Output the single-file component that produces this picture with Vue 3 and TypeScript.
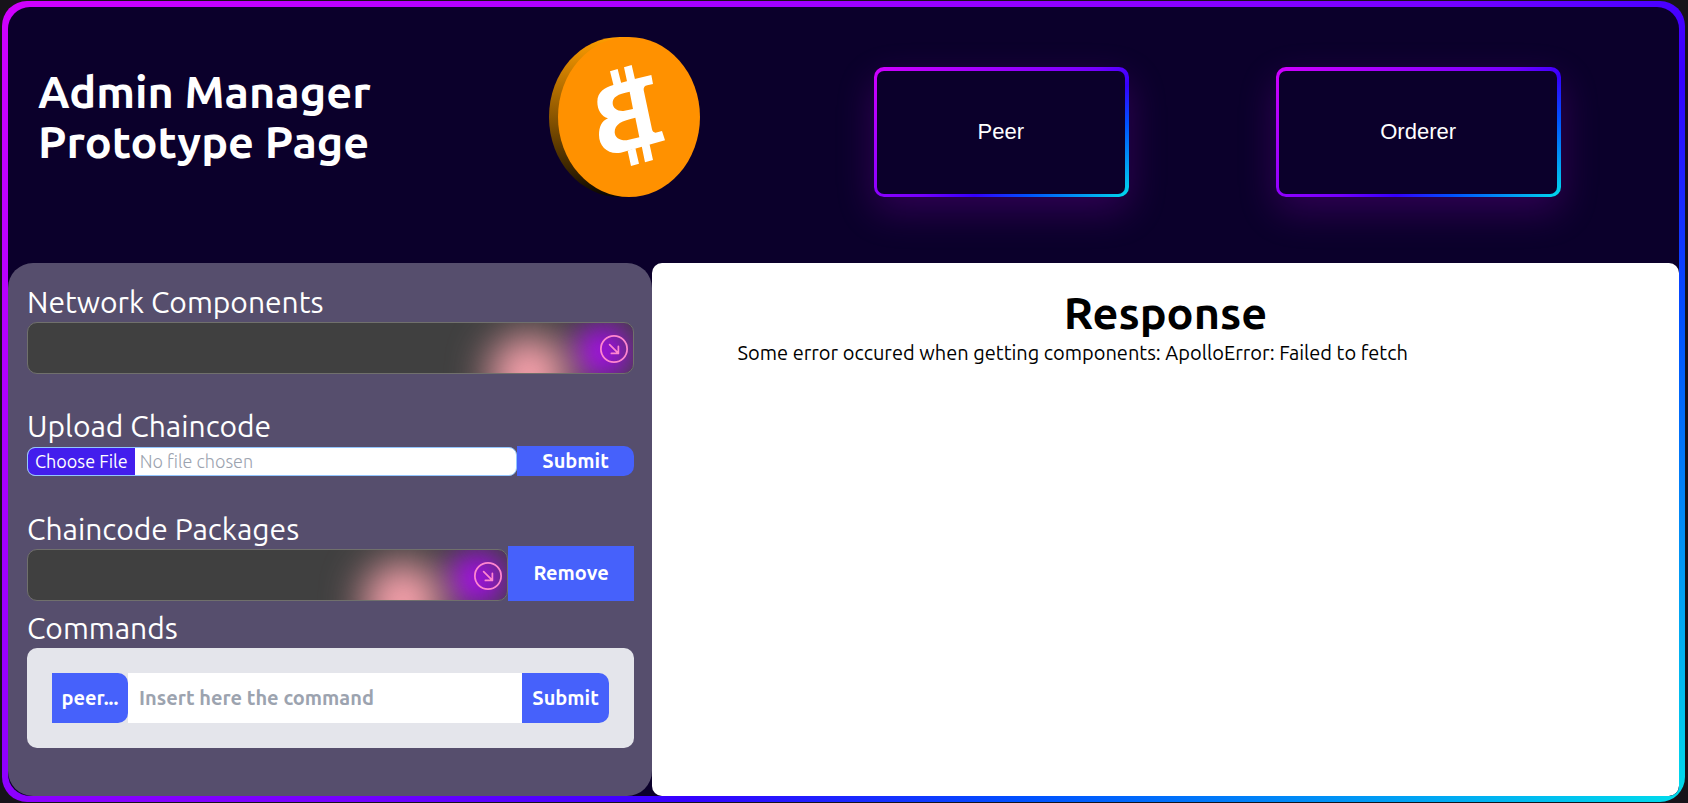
<script setup lang="ts">
import { ref } from 'vue'

const component = ref<string>('')
const chaincodePackage = ref<string>('')
const command = ref<string>('')
const response = ref<string>(
  'Some error occured when getting components: ApolloError: Failed to fetch',
)
const nodeTypes: string[] = ['Peer', 'Orderer']
</script>

<template>
  <div class="frame">
    <main class="page">
      <header class="top">
        <h1 class="title">Admin Manager Prototype Page</h1>
        <svg class="coin" viewBox="57 51 453 480" aria-hidden="true">
          <defs>
            <linearGradient id="rim" x1="0" y1="0" x2="0" y2="1">
              <stop offset="0" stop-color="#ff9d00" />
              <stop offset="0.5" stop-color="#8a5500" />
              <stop offset="0.85" stop-color="#352100" />
              <stop offset="1" stop-color="#0a0600" />
            </linearGradient>
          </defs>
          <path
            fill="url(#rim)"
            d="M297 51H270C152 51 57 158 57 291S152 531 270 531H297Z"
          />
          <ellipse cx="297" cy="291" rx="213" ry="240" fill="#ff9100" />
          <path
            fill="#fff"
            fill-rule="evenodd"
            d="M364 165L369 192L352 196Q340 198 341 210L366 328Q369 341 382 337L396 333L405 361L272 398C235 405 207 380 207 345C207 320 215 303 234 295C215 290 202 270 202 245C202 215 225 203 250 195L314 177ZM299 215C262 222 248 232 248 249C248 264 262 274 280 273L309 267ZM316 293C275 302 254 312 254 337C255 353 268 362 290 361L328 352Z"
          />
          <path
            fill="#fff"
            d="M240 154L263 147L275 195L252 202ZM282 142L305 135L316 182L292 188ZM293 392L316 384L327 431L303 438ZM335 378L358 370L369 420L345 427Z"
          />
        </svg>
        <button
          v-for="type in nodeTypes"
          :key="type"
          type="button"
          class="node-button"
          :class="type.toLowerCase()"
        >
          <span class="node-label">{{ type }}</span>
        </button>
      </header>

      <div class="workspace">
        <section class="controls">
          <div class="group">
            <label class="label" for="components">Network Components</label>
            <div class="picker">
              <select id="components" v-model="component" class="select"></select>
              <svg class="arrow" viewBox="0 0 16 16" aria-hidden="true">
                <circle cx="8" cy="8" r="7.5" />
                <path d="M5.5 5.5L10.5 10.5M6.5 10.5H10.5V6.5" />
              </svg>
            </div>
          </div>

          <form class="group" @submit.prevent>
            <label class="label" for="chaincode">Upload Chaincode</label>
            <div class="row">
              <input id="chaincode" type="file" class="file" />
              <button type="submit" class="action upload">Submit</button>
            </div>
          </form>

          <div class="group packages">
            <label class="label" for="packages">Chaincode Packages</label>
            <div class="row">
              <div class="picker">
                <select id="packages" v-model="chaincodePackage" class="select"></select>
                <svg class="arrow" viewBox="0 0 16 16" aria-hidden="true">
                  <circle cx="8" cy="8" r="7.5" />
                  <path d="M5.5 5.5L10.5 10.5M6.5 10.5H10.5V6.5" />
                </svg>
              </div>
              <button type="button" class="action remove">Remove</button>
            </div>
          </div>

          <form class="group" @submit.prevent>
            <label class="label" for="command">Commands</label>
            <div class="command">
              <button type="button" class="action prefix">peer...</button>
              <input
                id="command"
                v-model="command"
                type="text"
                class="command-input"
                placeholder="Insert here the command"
              />
              <button type="submit" class="action run">Submit</button>
            </div>
          </form>
        </section>

        <section class="response">
          <h2 class="response-title">Response</h2>
          <p class="response-text">{{ response }}</p>
        </section>
      </div>
    </main>
  </div>
</template>

<style>
body {
  margin: 0;
  background: #17131a;
}
</style>

<style scoped>
* {
  box-sizing: border-box;
}

.frame {
  --edge: linear-gradient(
    144deg,
    #d000ff,
    #8400ff 45%,
    #7400ff 52%,
    #3500ff 64%,
    #0050ff 76%,
    #00ddeb
  );
  display: flex;
  min-height: calc(100vh - 2px);
  margin: 1px 3px 1px 2px;
  padding: 6px;
  border-radius: 25px;
  background: var(--edge);
  font-family: Ubuntu, 'Noto Sans', sans-serif;
  font-size: 20px;
  line-height: 30px;
}

.page {
  flex: 1;
  display: flex;
  flex-direction: column;
  min-width: 0;
  border-radius: 22px 22px 10px 22px;
  background: #0b002b;
  overflow: hidden;
}

.top {
  display: grid;
  grid-template-columns: repeat(4, 1fr);
  justify-items: start;
  align-items: start;
  min-height: 256px;
}

.title {
  max-width: 380px;
  margin: 60px 0 0 30px;
  color: #fff;
  font-size: 45px;
  font-weight: 600;
  line-height: 50px;
}

.coin {
  justify-self: center;
  width: 151px;
  height: 160px;
  margin: 30px 20px 0 0;
}

.node-button {
  display: flex;
  height: 130px;
  margin-top: 60px;
  padding: 4px 4px 3px 3px;
  border: 0;
  border-radius: 10px;
  background: var(--edge);
  box-shadow: 0 14px 38px rgba(180, 0, 230, 0.22);
  color: #fff;
  font-family: 'Liberation Sans', Arial, sans-serif;
  font-size: 22px;
  cursor: pointer;
}

.node-label {
  display: flex;
  align-items: center;
  height: 100%;
  padding: 0 101px 2px;
  border-radius: 7px;
  background: #0b002b;
}

.peer {
  margin-left: 30px;
}

.orderer {
  margin-left: 15px;
}

.workspace {
  flex: 1;
  display: grid;
  grid-template-columns: 37fr 59fr;
}

.controls {
  display: flex;
  flex-direction: column;
  gap: 36px;
  min-width: 0;
  padding: 23px 18px 48px 19px;
  border-radius: 25px;
  background: #564e6d;
}

.group {
  display: flex;
  flex-direction: column;
}

.packages {
  margin: 1px 0 -25px;
}

.label {
  margin-bottom: 4px;
  color: #fff;
  font-size: 30px;
  font-weight: 400;
  line-height: 32px;
}

.row {
  display: flex;
  align-items: flex-end;
}

.picker {
  position: relative;
  flex: 1;
  height: 52px;
  border: 1px solid #70706c;
  border-radius: 10px;
  background: #404040;
  overflow: hidden;
}

.group > .picker {
  flex: none;
}

.picker::before,
.picker::after {
  content: '';
  position: absolute;
  border-radius: 50%;
}

.picker::before {
  top: 1px;
  right: 2px;
  width: 56px;
  height: 56px;
  background: #a80af0;
  filter: blur(16px);
}

.picker::after {
  top: 12px;
  right: 64px;
  width: 80px;
  height: 80px;
  background: #fda4af;
  filter: blur(20px);
}

.select {
  position: absolute;
  z-index: 1;
  inset: 0;
  width: 100%;
  height: 100%;
  padding: 0 48px 0 12px;
  border: 0;
  background: transparent;
  color: #fff;
  font: inherit;
  appearance: none;
}

.arrow {
  position: absolute;
  z-index: 2;
  top: 12px;
  right: 5px;
  width: 28px;
  height: 28px;
  fill: none;
  stroke: #ff86cf;
  stroke-linecap: round;
  stroke-linejoin: round;
  pointer-events: none;
}

.file {
  flex: 1;
  min-width: 0;
  height: 29px;
  border: 1px solid #93c5fd;
  border-radius: 8px;
  background: #fff;
  color: #9ca3af;
  font-family: inherit;
  font-size: 18px;
  font-weight: 300;
  line-height: 27px;
  overflow: hidden;
}

.file::file-selector-button {
  height: 27px;
  margin: 0 5px 0 0;
  padding: 0 7px;
  border: 0;
  background: #431eed;
  color: #fff;
  font: inherit;
  font-weight: 400;
}

.action {
  padding: 0 0 2px;
  border: 0;
  background: #4661fb;
  color: #fff;
  font-family: inherit;
  font-size: 20px;
  font-weight: 600;
  cursor: pointer;
}

.upload {
  width: 117px;
  height: 30px;
  border-radius: 0 10px 10px 0;
}

.remove {
  width: 126px;
  height: 55px;
  margin-top: -3px;
}

.command {
  display: flex;
  height: 100px;
  padding: 25px;
  border-radius: 10px;
  background: #e4e5eb;
}

.prefix {
  width: 76px;
  border-radius: 0 10px 10px 0;
}

.command-input {
  flex: 1;
  min-width: 0;
  padding: 0 11px 2px;
  border: 0;
  background: #fff;
  color: #111;
  font-family: inherit;
  font-size: 20px;
  font-weight: 600;
}

.command-input::placeholder {
  color: #9ca3af;
}

.run {
  width: 87px;
  border-radius: 0 10px 10px 0;
}

.response {
  min-width: 0;
  padding: 25px calc(100% / 12);
  border-radius: 10px;
  background: #fff;
  color: #000;
}

.response-title {
  margin: 0;
  font-size: 45px;
  font-weight: 700;
  line-height: 50px;
  text-align: center;
}

.response-text {
  margin: 0;
}
</style>
